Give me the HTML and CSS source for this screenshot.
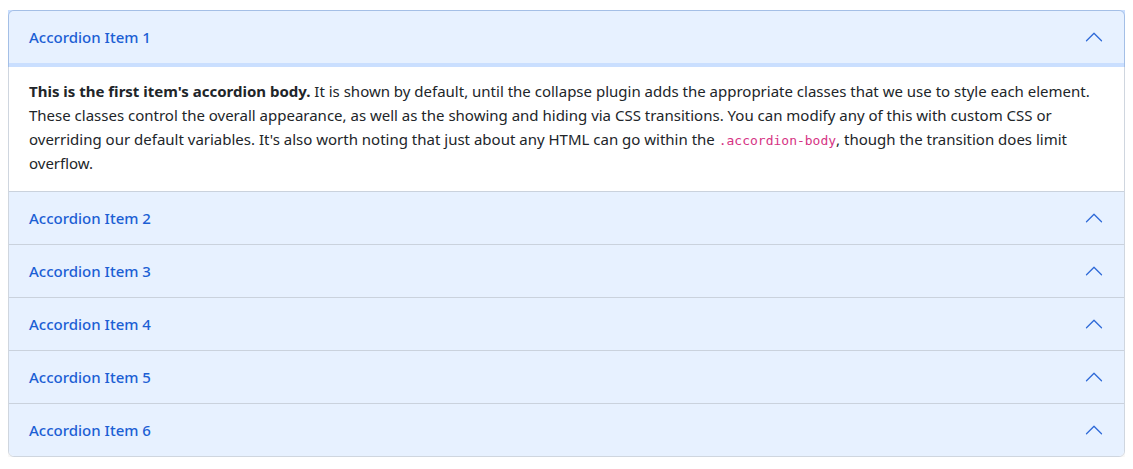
FILE: index.html
```html
<!DOCTYPE html>
<html lang="en">
<head>
<meta charset="utf-8">
<title>Accordion</title>
<link rel="stylesheet" href="styles.css">
</head>
<body>
<div class="accordion">
  <div class="item">
    <button class="head focused" type="button">
      <span class="title">Accordion Item 1</span>
      <svg class="chev" viewBox="0 0 16 16" width="20" height="20"><path fill="currentColor" fill-rule="evenodd" d="M1.646 11.354a.5.5 0 0 0 .708 0L8 5.707l5.646 5.647a.5.5 0 0 0 .708-.708l-6-6a.5.5 0 0 0-.708 0l-6 6a.5.5 0 0 0 0 .708z"/></svg>
    </button>
    <div class="body">
      <strong>This is the first item's accordion body.</strong> It is shown by default, until the collapse plugin adds the appropriate classes that we use to style each element. These classes control the overall appearance, as well as the showing and hiding via CSS transitions. You can modify any of this with custom CSS or overriding our default variables. It's also worth noting that just about any HTML can go within the <code>.accordion-body</code>, though the transition does limit overflow.
    </div>
  </div>
  <div class="item">
    <button class="head" type="button"><span class="title">Accordion Item 2</span><svg class="chev" viewBox="0 0 16 16" width="20" height="20"><path fill="currentColor" fill-rule="evenodd" d="M1.646 11.354a.5.5 0 0 0 .708 0L8 5.707l5.646 5.647a.5.5 0 0 0 .708-.708l-6-6a.5.5 0 0 0-.708 0l-6 6a.5.5 0 0 0 0 .708z"/></svg></button>
  </div>
  <div class="item">
    <button class="head" type="button"><span class="title">Accordion Item 3</span><svg class="chev" viewBox="0 0 16 16" width="20" height="20"><path fill="currentColor" fill-rule="evenodd" d="M1.646 11.354a.5.5 0 0 0 .708 0L8 5.707l5.646 5.647a.5.5 0 0 0 .708-.708l-6-6a.5.5 0 0 0-.708 0l-6 6a.5.5 0 0 0 0 .708z"/></svg></button>
  </div>
  <div class="item">
    <button class="head" type="button"><span class="title">Accordion Item 4</span><svg class="chev" viewBox="0 0 16 16" width="20" height="20"><path fill="currentColor" fill-rule="evenodd" d="M1.646 11.354a.5.5 0 0 0 .708 0L8 5.707l5.646 5.647a.5.5 0 0 0 .708-.708l-6-6a.5.5 0 0 0-.708 0l-6 6a.5.5 0 0 0 0 .708z"/></svg></button>
  </div>
  <div class="item">
    <button class="head" type="button"><span class="title">Accordion Item 5</span><svg class="chev" viewBox="0 0 16 16" width="20" height="20"><path fill="currentColor" fill-rule="evenodd" d="M1.646 11.354a.5.5 0 0 0 .708 0L8 5.707l5.646 5.647a.5.5 0 0 0 .708-.708l-6-6a.5.5 0 0 0-.708 0l-6 6a.5.5 0 0 0 0 .708z"/></svg></button>
  </div>
  <div class="item">
    <button class="head" type="button"><span class="title">Accordion Item 6</span><svg class="chev" viewBox="0 0 16 16" width="20" height="20"><path fill="currentColor" fill-rule="evenodd" d="M1.646 11.354a.5.5 0 0 0 .708 0L8 5.707l5.646 5.647a.5.5 0 0 0 .708-.708l-6-6a.5.5 0 0 0-.708 0l-6 6a.5.5 0 0 0 0 .708z"/></svg></button>
  </div>
</div>
</body>
</html>
```
FILE: styles.css
```css
html, body {
  background: #ffffff;
}
body {
  margin: 10px 8px 8px 8px;
  font-family: "Noto Sans", "Open Sans", sans-serif;
  font-size: 15px;
  line-height: 24px;
  color: #212529;
}
.accordion {
  border: 1px solid #cfd6df;
  border-radius: 6px;
  background: #ffffff;
  box-shadow: 0 2px 5px rgba(0, 0, 0, 0.07);
}
.item + .item {
  border-top: 1px solid #cad2dd;
}
.head {
  display: flex;
  align-items: center;
  justify-content: space-between;
  width: 100%;
  height: 52px;
  padding: 0 20px;
  border: 0;
  margin: 0;
  background: #e7f1ff;
  color: #1c5fd4;
  font-family: inherit;
  font-size: 15px;
  font-weight: 500;
  line-height: 24px;
  text-align: left;
  cursor: pointer;
}
.item:first-child .head {
  border-radius: 5px 5px 0 0;
}
.item:last-child .head {
  border-radius: 0 0 5px 5px;
}
.head.focused {
  position: relative;
  z-index: 1;
  box-shadow: 0 0 0 4px rgba(13, 110, 253, 0.22);
}
.chev {
  flex: none;
  color: #2f6ad8;
}
.body {
  padding: 16px 20px;
}
.body strong {
  font-weight: 700;
}
code {
  font-family: "DejaVu Sans Mono", monospace;
  font-size: 13px;
  line-height: 1;
  color: #d63384;
}
```
